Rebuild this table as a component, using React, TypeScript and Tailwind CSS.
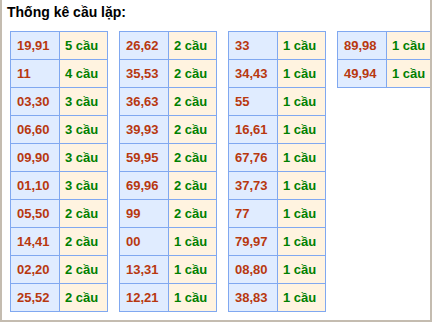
import React from 'react';

type Row = [string, number];

const tables: Row[][] = [
  [['19,91', 5], ['11', 4], ['03,30', 3], ['06,60', 3], ['09,90', 3], ['01,10', 3], ['05,50', 2], ['14,41', 2], ['02,20', 2], ['25,52', 2]],
  [['26,62', 2], ['35,53', 2], ['36,63', 2], ['39,93', 2], ['59,95', 2], ['69,96', 2], ['99', 2], ['00', 1], ['13,31', 1], ['12,21', 1]],
  [['33', 1], ['34,43', 1], ['55', 1], ['16,61', 1], ['67,76', 1], ['37,73', 1], ['77', 1], ['79,97', 1], ['08,80', 1], ['38,83', 1]],
  [['89,98', 1], ['49,94', 1]],
];

const CauTable: React.FC<{ rows: Row[] }> = ({ rows }) => (
  <table className="border-collapse shrink-0 w-[98px] table-fixed">
    <tbody>
      {rows.map(([num, count], i) => (
        <tr key={i} className="h-[28px]">
          <td className="w-[49px] border border-[#80a8f0] bg-[#e0ecff] pl-[6px] text-[#b8380f] p-0">{num}</td>
          <td className="border border-[#80a8f0] bg-[#fff3e0] pl-[5px] text-[#008000] p-0 whitespace-nowrap">{count} cầu</td>
        </tr>
      ))}
    </tbody>
  </table>
);

export default function App() {
  return (
    <div className="w-[432px] h-[322px] bg-white border-x-2 border-b-2 border-[#c4bcb0] overflow-hidden font-['Liberation_Sans',Arial,sans-serif] font-bold">
      <div className="text-[14px] leading-[16px] text-black pl-[5px] pt-[4px]">Thống kê cầu lặp:</div>
      <div className="flex items-start gap-[11px] pl-[8px] pt-[11px] text-[13px]">
        {tables.map((rows, i) => (
          <CauTable key={i} rows={rows} />
        ))}
      </div>
    </div>
  );
}
